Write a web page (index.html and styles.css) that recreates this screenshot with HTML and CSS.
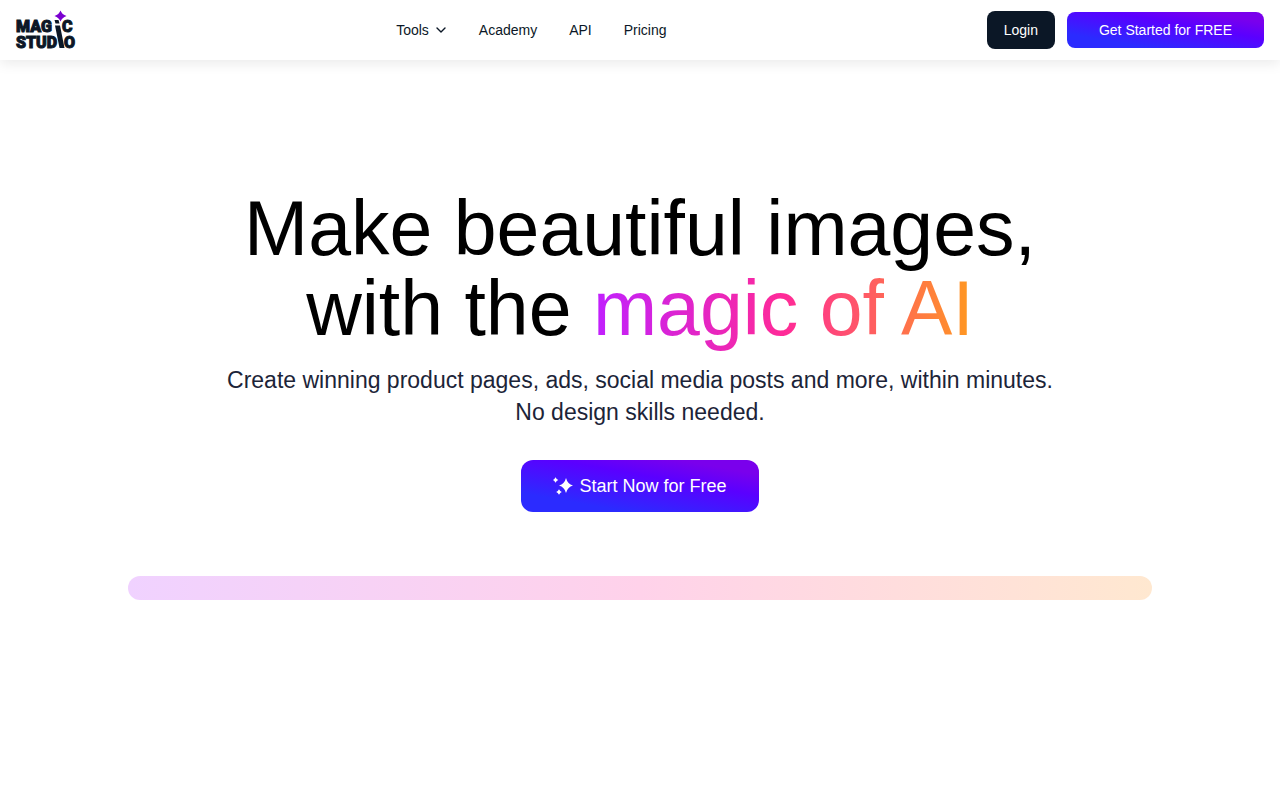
FILE: index.html
```html
<!DOCTYPE html>
<html lang="en">
<head>
    <meta charset="UTF-8">
    <meta name="viewport" content="width=device-width, initial-scale=1.0">
    <title>Magic Studio</title>
    <link rel="stylesheet" href="styles.css">
</head>
<body>

    <header class="header">
        <div class="header-side">
            <a href="#" class="logo" aria-label="Magic Studio">
                <svg width="60" height="40" viewBox="0 0 60 40">
                    <g class="logo-text">
                        <text x="0" y="22">MAG</text>
                        <text x="46" y="22">C</text>
                        <text x="0" y="38">STUD</text>
                        <text x="48" y="38">O</text>
                    </g>
                    <path class="logo-slash" d="M38.500 10h4l1 3.500h-4zM39 15.500h5l4.500 22.500h-5z"/>
                    <path class="logo-star" d="M44.500 0.500Q46 4.500 50.500 6Q46 7.500 44.500 11.500Q43 7.500 38.500 6Q43 4.500 44.500 0.500z"/>
                </svg>
            </a>
        </div>

        <nav class="nav">
            <button type="button" class="nav-item">
                Tools
                <svg width="12" height="12" viewBox="0 0 12 12" fill="none" stroke="currentColor" stroke-width="1.400" stroke-linecap="round" stroke-linejoin="round">
                    <path d="M2 4l4 4 4-4"/>
                </svg>
            </button>
            <a href="#" class="nav-item">Academy</a>
            <a href="#" class="nav-item">API</a>
            <a href="#" class="nav-item">Pricing</a>
        </nav>

        <div class="header-side actions">
            <button type="button" class="btn btn-dark">Login</button>
            <button type="button" class="btn btn-gradient">Get Started for FREE</button>
        </div>
    </header>

    <main class="hero">
        <h1>Make beautiful images,<br>with the <span class="gradient-text">magic of AI</span></h1>
        <p>Create winning product pages, ads, social media posts and more, within minutes.<br>No design skills needed.</p>
        <button type="button" class="btn btn-gradient btn-large">
            <svg width="20" height="20" viewBox="0 0 20 20" fill="currentColor">
                <path d="M13 2Q14.500 8 20 9.500Q14.500 11 13 17Q11.500 11 6 9.500Q11.500 8 13 2z"/>
                <path d="M2.500 1.200Q3.500 3.200 5.300 4Q3.500 4.800 2.500 6.800Q1.500 4.800 0 4Q1.500 3.200 2.500 1.200z"/>
                <path d="M6 13.200Q7 15.200 8.800 16Q7 16.800 6 18.800Q5 16.800 3.200 16Q5 15.200 6 13.200z"/>
            </svg>
            Start Now for Free
        </button>
        <div class="strip"></div>
    </main>

</body>
</html>
```
FILE: styles.css
```css
* {
    box-sizing: border-box;
}
body {
    margin: 0;
    font-family: "Liberation Sans", Arial, sans-serif;
    color: #0b1726;
    background-color: #fff;
}
button {
    font-family: inherit;
    border: none;
    cursor: pointer;
}
.header {
    display: flex;
    align-items: center;
    height: 60px;
    padding: 0 16px;
    background-color: #fff;
    box-shadow: 0 4px 12px rgba(0, 0, 0, 0.08);
}
.header-side {
    display: flex;
    align-items: center;
}
.logo {
    display: block;
    height: 40px;
}
.logo svg {
    display: block;
    overflow: visible;
}
.logo-text {
    font-family: Roboto, "Liberation Sans", sans-serif;
    font-size: 16px;
    font-weight: 900;
    fill: #0b1726;
    stroke: #0b1726;
    stroke-width: 1px;
}
.logo-slash {
    fill: #0b1726;
}
.logo-star {
    fill: #7a00d0;
}
.nav {
    display: flex;
    flex: 1;
    justify-content: center;
    gap: 32px;
}
.nav-item {
    display: flex;
    align-items: center;
    gap: 6px;
    padding: 0;
    font-size: 14px;
    line-height: 20px;
    color: #0b1726;
    background: none;
    text-decoration: none;
}
.actions {
    gap: 12px;
}
.btn {
    font-size: 14px;
    line-height: 20px;
    color: #fff;
    border-radius: 8px;
}
.btn-dark {
    padding: 9px 17px;
    background-color: #0b1726;
}
.btn-gradient {
    padding: 8px 32px;
    background: linear-gradient(10deg, #2b2bff 20%, #5a00ff 62%, #7a00ec 85%);
}
.hero {
    display: flex;
    flex-direction: column;
    align-items: center;
    padding: 128px;
    text-align: center;
}
h1 {
    margin: 0;
    font-size: 77px;
    font-weight: normal;
    line-height: 80px;
    color: #000;
}
.gradient-text {
    color: transparent;
    background: linear-gradient(to right, #c020ff, #ff2a98, #ff9a20);
    -webkit-background-clip: text;
    background-clip: text;
}
.hero p {
    margin: 16px 0 32px;
    font-size: 23px;
    line-height: 32px;
    color: #1c2438;
}
.btn-large {
    display: flex;
    align-items: center;
    gap: 6px;
    padding: 12px 32px;
    font-size: 18px;
    line-height: 28px;
    border-radius: 12px;
}
.strip {
    width: 100%;
    height: 24px;
    margin-top: 64px;
    border-radius: 12px;
    background: linear-gradient(to right, #f0d2ff, #ffd2ea, #ffe8d0);
}
```
